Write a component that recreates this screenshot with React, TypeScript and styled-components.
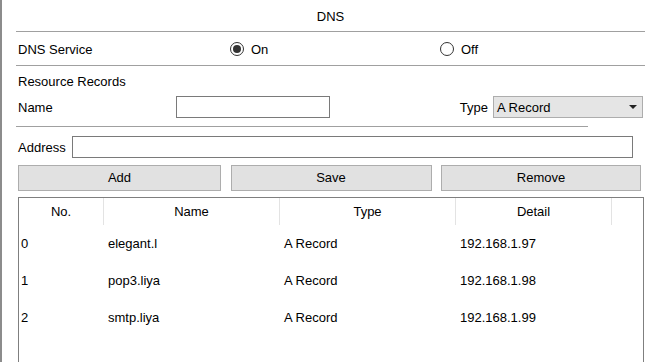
import React from "react";
import styled, { createGlobalStyle } from "styled-components";

const Global = createGlobalStyle`
  html, body { margin: 0; padding: 0; background: #fff; }
  body {
    width: 648px; height: 362px; overflow: hidden;
    font-family: "Liberation Sans", Arial, sans-serif;
    font-size: 13px; color: #000;
  }
  * { box-sizing: border-box; }
`;

const Frame = styled.div`
  width: 648px;
  height: 362px;
  border-left: 2px solid #8c8c8c;
  padding-left: 14px;
  padding-right: 3px;
  overflow: hidden;
  display: flex;
  flex-direction: column;
`;

const Title = styled.div`
  height: 32px;
  border-bottom: 1px solid #a0a0a0;
  display: flex;
  align-items: center;
  justify-content: center;
  padding-top: 2px;
`;

const ServiceRow = styled.div`
  height: 34px;
  border-bottom: 1px solid #a0a0a0;
  display: grid;
  grid-template-columns: 212px 210px 1fr;
  align-items: center;
  padding-left: 2px;
  padding-top: 1px;
`;

const RadioLabel = styled.label`
  display: flex;
  align-items: center;
  gap: 7px;
`;

const RadioCircle = styled.span<{ $on?: boolean }>`
  width: 14px;
  height: 14px;
  border-radius: 50%;
  border: 1px solid #333;
  background: #fff;
  display: flex;
  align-items: center;
  justify-content: center;
  &::after {
    content: "";
    width: 8px;
    height: 8px;
    border-radius: 50%;
    background: ${(p) => (p.$on ? "#333" : "transparent")};
  }
`;

const SectionLabel = styled.div`
  height: 16px;
  margin-top: 8px;
  padding-left: 2px;
  line-height: 16px;
`;

const NameRow = styled.div`
  height: 22px;
  margin-top: 6px;
  display: flex;
  align-items: center;
  padding-left: 2px;
  width: 627px;
`;

const FieldLabel = styled.span<{ $w?: number }>`
  width: ${(p) => (p.$w ? `${p.$w}px` : "auto")};
  flex-shrink: 0;
`;

const TextBox = styled.div<{ $w?: number }>`
  height: 22px;
  width: ${(p) => (p.$w ? `${p.$w}px` : "auto")};
  flex: ${(p) => (p.$w ? "0 0 auto" : "1")};
  border: 1px solid #7a7a7a;
  background: #fff;
`;

const Spacer = styled.div`
  flex: 1;
`;

const Select = styled.div`
  width: 150px;
  height: 22px;
  margin-left: 5px;
  border: 1px solid #adadad;
  background: #e5e5e5;
  display: flex;
  align-items: center;
  justify-content: space-between;
  padding: 0 5px 0 3px;
`;

const Arrow = styled.span`
  width: 0;
  height: 0;
  border-left: 4px solid transparent;
  border-right: 4px solid transparent;
  border-top: 4px solid #222;
`;

const ShortRule = styled.div`
  width: 572px;
  height: 1px;
  background: #a0a0a0;
  margin-top: 8px;
`;

const AddressRow = styled.div`
  height: 22px;
  margin-top: 9px;
  display: flex;
  align-items: center;
  padding-left: 2px;
  width: 617px;
`;

const ButtonRow = styled.div`
  margin-top: 7px;
  height: 26px;
  width: 625px;
  padding-left: 2px;
  display: grid;
  grid-template-columns: 203px 201px 200px;
  justify-content: space-between;
`;

const Button = styled.button`
  height: 26px;
  border: 1px solid #adadad;
  background: #e1e1e1;
  font-family: inherit;
  font-size: 13px;
  color: #000;
  padding: 0 0 1px;
`;

const Table = styled.div`
  margin-top: 6px;
  margin-left: 2px;
  width: 626px;
  flex: 1;
  border: 1px solid #7f7f7f;
  border-bottom: none;
  display: flex;
  flex-direction: column;
`;

const cols = "85px 176px 176px 156px 1fr";

const HeadRow = styled.div`
  height: 27px;
  display: grid;
  grid-template-columns: ${cols};
`;

const HeadCell = styled.div<{ $last?: boolean }>`
  display: flex;
  align-items: center;
  justify-content: center;
  border-right: ${(p) => (p.$last ? "none" : "1px solid #e3e3e3")};
  padding-bottom: 1px;
`;

const BodyRow = styled.div`
  height: 37px;
  display: grid;
  grid-template-columns: ${cols};
  align-items: center;
`;

const Cell = styled.div<{ $pad?: number }>`
  padding-left: ${(p) => p.$pad ?? 4}px;
  white-space: nowrap;
`;

const records = [
  { no: "0", name: "elegant.l", type: "A Record", detail: "192.168.1.97" },
  { no: "1", name: "pop3.liya", type: "A Record", detail: "192.168.1.98" },
  { no: "2", name: "smtp.liya", type: "A Record", detail: "192.168.1.99" },
];

export default function App() {
  return (
    <>
      <Global />
      <Frame>
        <Title>DNS</Title>
        <ServiceRow>
          <span>DNS Service</span>
          <RadioLabel>
            <RadioCircle $on />
            On
          </RadioLabel>
          <RadioLabel>
            <RadioCircle />
            Off
          </RadioLabel>
        </ServiceRow>
        <SectionLabel>Resource Records</SectionLabel>
        <NameRow>
          <FieldLabel $w={158}>Name</FieldLabel>
          <TextBox $w={154} />
          <Spacer />
          <FieldLabel>Type</FieldLabel>
          <Select>
            <span>A Record</span>
            <Arrow />
          </Select>
        </NameRow>
        <ShortRule />
        <AddressRow>
          <FieldLabel $w={54}>Address</FieldLabel>
          <TextBox />
        </AddressRow>
        <ButtonRow>
          <Button>Add</Button>
          <Button>Save</Button>
          <Button>Remove</Button>
        </ButtonRow>
        <Table>
          <HeadRow>
            <HeadCell>No.</HeadCell>
            <HeadCell>Name</HeadCell>
            <HeadCell>Type</HeadCell>
            <HeadCell>Detail</HeadCell>
            <HeadCell $last />
          </HeadRow>
          {records.map((r) => (
            <BodyRow key={r.no}>
              <Cell $pad={2}>{r.no}</Cell>
              <Cell>{r.name}</Cell>
              <Cell>{r.type}</Cell>
              <Cell>{r.detail}</Cell>
              <Cell />
            </BodyRow>
          ))}
        </Table>
      </Frame>
    </>
  );
}
